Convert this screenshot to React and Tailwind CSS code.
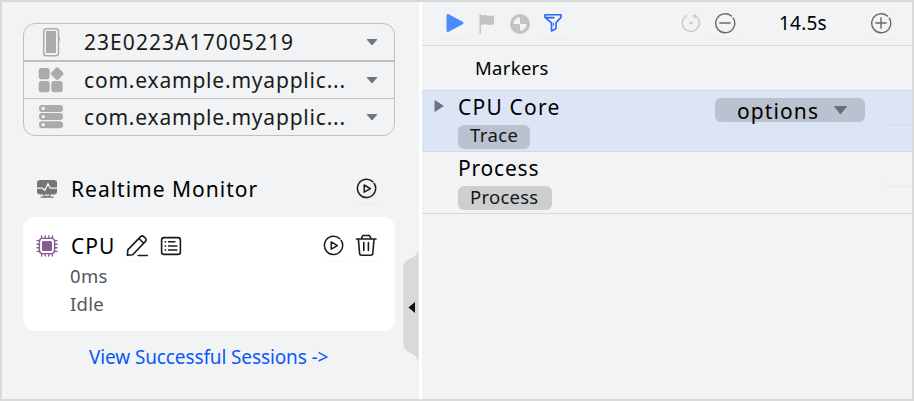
import React from "react";

const Caret = () => (
  <svg className="h-2 w-3 shrink-0" viewBox="0 0 12 8" fill="#6f757e">
    <path d="M1.2 1.5h9.6L6 7z" stroke="#6f757e" strokeLinejoin="round" />
  </svg>
);

const PhoneIcon = () => (
  <svg className="h-[30px] w-7" viewBox="0 0 28 30" fill="none">
    <rect x="6.7" y="1.7" width="14.8" height="27" rx="2.8" stroke="#ababab" strokeWidth="1.5" />
    <rect x="9" y="4" width="10" height="22" fill="#ababab" />
    <path d="M22.3 10v4" stroke="#ababab" />
  </svg>
);

const AppsIcon = () => (
  <svg className="h-[30px] w-7" viewBox="0 0 28 30" fill="#ababab">
    <rect x="1.7" y="3" width="11" height="11.2" rx="2.8" />
    <rect x="1.7" y="16" width="11" height="11.2" rx="2.8" />
    <rect x="14.3" y="16" width="11.4" height="11.2" rx="2.8" />
    <rect x="15.2" y="3.6" width="10" height="10" rx="2" transform="rotate(45 20.2 8.6)" />
  </svg>
);

const ServerIcon = () => (
  <svg className="h-[30px] w-7" viewBox="0 0 28 30">
    {[3, 11.1, 19.2].map((y) => (
      <g key={y}>
        <rect x="2" y={y} width="24" height="7" rx="3" fill="#ababab" />
        <circle cx="6.2" cy={y + 3.5} r="1.7" fill="#f1f3f5" />
      </g>
    ))}
  </svg>
);

const MonitorIcon = () => (
  <svg className="h-5 w-[22px]" viewBox="0 0 22 20" fill="none">
    <rect x="1" y="1" width="20" height="14.4" rx="3" fill="#757575" />
    <path d="M1 9.2h5.6l2.2 2.2L12 4.8l2.2 4.4H21" stroke="#f1f3f5" strokeWidth="1.3" />
    <path d="M8 15v2.4h6V15M4.6 18.1h13" stroke="#757575" strokeWidth="1.2" />
  </svg>
);

const ChipIcon = () => (
  <svg className="size-[22px]" viewBox="0 0 22 22" fill="none" stroke="#885b93" strokeWidth="1.4" strokeLinecap="round">
    <rect x="3.4" y="3.4" width="15.2" height="15.2" rx="3" />
    <rect x="6" y="6" width="10" height="10" rx="1.6" fill="#885b93" stroke="none" />
    <path d="M5.6 3.2V1M9.2 3.2V1M12.8 3.2V1M16.4 3.2V1M5.6 21v-2.2M9.2 21v-2.2M12.8 21v-2.2M16.4 21v-2.2M3.2 5.6H1M3.2 9.2H1M3.2 12.8H1M3.2 16.4H1M21 5.6h-2.2M21 9.2h-2.2M21 12.8h-2.2M21 16.4h-2.2" />
  </svg>
);

const PencilIcon = () => (
  <svg className="size-6" viewBox="0 0 24 24" fill="none" stroke="#1b1b1b" strokeWidth="1.6" strokeLinejoin="round" strokeLinecap="round">
    <path d="M2.4 22.2l.4-5.3L15.6 3.6a2.3 2.3 0 0 1 3.2 0l1.6 1.6a2.3 2.3 0 0 1 0 3.2L7.7 21.7zM13.9 5.5l4.8 4.8M13.3 22.5h9" />
  </svg>
);

const ListIcon = () => (
  <svg className="h-5 w-[22px]" viewBox="0 0 22 20" fill="none" stroke="#1b1b1b" strokeWidth="1.6">
    <rect x="1.6" y="1.6" width="18.8" height="16.8" rx="2.4" />
    <path d="M4.6 5.8h1.6M4.6 10h1.6M4.6 14h1.6M8 5.8h7.4M8 10h9.4M8 14h9.4" strokeWidth="1.4" />
  </svg>
);

const PlayCircle = () => (
  <svg className="size-[22px]" viewBox="0 0 22 22" fill="none" stroke="#1b1b1b" strokeWidth="1.5" strokeLinejoin="round" strokeLinecap="round">
    <path d="M18.2 6.5A9.1 9.1 0 1 1 16.8 4.8" />
    <path d="M8.2 8v7.2l6.2-3.6z" />
  </svg>
);

const TrashIcon = () => (
  <svg className="size-6" viewBox="0 0 24 24" fill="none" stroke="#1b1b1b" strokeWidth="1.6" strokeLinejoin="round" strokeLinecap="round">
    <path d="M2.4 6h19.6M7.4 5.8l1.4-3.3h6.8l1.4 3.3M4.4 6.3l1.2 14a2 2 0 0 0 2 1.9h9.2a2 2 0 0 0 2-1.900L20 6.300M9.8 9.500v8M14.400 9.500v8" />
  </svg>
);

const ZoomCircle = ({ plus }) => (
  <svg className="size-[22px]" viewBox="0 0 22 22" fill="none" stroke="#67696c" strokeWidth="1.4" strokeLinecap="round">
    <path d="M19.3 6.2A9.5 9.5 0 1 1 17.4 4" />
    <path d="M5.8 11h10.4" />
    {plus && <path d="M11 5.8v10.4" />}
  </svg>
);

/* Square icon button whose rounded lower edge is faintly visible */
const IconButton = ({ className = "", children }) => (
  <div className={"flex h-8 w-8 shrink-0 items-center justify-center rounded-md border-b-2 border-black/[0.015] " + className}>
    {children}
  </div>
);

const Selector = ({ icon, label, className, textClass }) => (
  <div className={"flex items-center pl-[13px] pr-4 " + className}>
    {icon}
    <span className={"ml-[19px] flex-1 text-[21px] leading-[30px] text-[#1b1b1b] " + textClass}>{label}</span>
    <Caret />
  </div>
);

const Sidebar = () => (
  <div className="relative flex w-[417px] shrink-0 flex-col pl-[21px]">
    <div className="mt-[21px] flex h-[113px] w-[372px] flex-col rounded-[12px] border border-[#bfc0c2]">
      <Selector icon={<PhoneIcon />} label="23E0223A17005219" className="h-[38px] border-b-2 border-[#bfc0c2]" textClass="tracking-[1.05px]" />
      <Selector icon={<AppsIcon />} label="com.example.myapplic..." className="h-[37px] border-b border-[#bfc0c2]" textClass="tracking-[0.8px]" />
      <Selector icon={<ServerIcon />} label="com.example.myapplic..." className="h-9" textClass="tracking-[0.8px]" />
    </div>

    <div className="mt-[33px] flex h-10 w-[372px] items-center pl-[13px] pr-3">
      <MonitorIcon />
      <span className="ml-[13px] flex-1 text-[21px] leading-[30px] tracking-[1px] text-black">Realtime Monitor</span>
      <IconButton><PlayCircle /></IconButton>
    </div>

    <div className="mt-2 flex h-[114px] w-[372px] flex-col rounded-[12px] bg-white pl-[13px] pr-3 pt-[13px]">
      <div className="flex h-8 items-center">
        <ChipIcon />
        <span className="ml-[13px] w-[50px] text-[21px] leading-[30px] tracking-[1px] text-black">CPU</span>
        <IconButton><PencilIcon /></IconButton>
        <div className="ml-[7px]"><ListIcon /></div>
        <IconButton className="ml-auto"><PlayCircle /></IconButton>
        <IconButton className="mr-px"><TrashIcon /></IconButton>
      </div>
      <div className="pl-[34px] text-[18.5px] leading-7 tracking-[0.3px] text-[#54565a]">
        <div>0ms</div>
        <div>Idle</div>
      </div>
    </div>

    <div className="mt-3 pl-[66px] text-[19px] leading-7 tracking-[-0.12px] text-[#0a59f7]"><span>View Successful Sessions -&gt;</span></div>

    <svg className="absolute right-0 top-[246px] h-[116px] w-4" viewBox="0 0 16 116">
      <path d="M15.5 0C15 6 11.5 9 7.5 10.5 2.5 12 .3 16 .3 20v74c0 5 2.2 9 7.2 11 5 2 7.5 5 8 11z" fill="#d9d9d9" />
      <path d="M12 54v11L5.5 59.5z" fill="#111" />
    </svg>
  </div>
);

const Toolbar = () => (
  <div className="flex h-[44px] shrink-0 items-center border-b border-[#d8dade] pl-[17px] pr-[15px]">
    <IconButton>
      <svg className="size-5" viewBox="0 0 20 20"><path d="M3 2.5v15L17 10z" fill="#4b8bff" stroke="#4b8bff" strokeWidth="3" strokeLinejoin="round" /></svg>
    </IconButton>
    <div className="flex w-8 justify-center">
      <svg className="size-5" viewBox="0 0 20 20" fill="#c2c3c5"><path d="M2.5 0v20h1.4V11.2h.8c3-2.4 6.500 1.2 12.300-1V1.200c-5 2.100-8-1.600-12.300.2h-.8V0z" /></svg>
    </div>
    <div className="flex w-[34px] justify-center">
      <svg className="size-5" viewBox="0 0 20 20"><circle cx="10" cy="10" r="10" fill="#c2c3c5" /><path d="M10 3v7H3.500A7 7 0 0 1 10 3zM10 17v-7h6.500A7 7 0 0 1 10 17z" fill="#f1f3f5" /></svg>
    </div>
    <IconButton>
      <svg className="size-5" viewBox="0 0 20 20" fill="none" stroke="#2468f8" strokeWidth="1.6" strokeLinejoin="round"><path d="M2 1.8h16v2.600l-5 5.400v5.800L8.500 18V9.800L2 4.400zM2.500 4.600h9" /><path d="M10.400 9.800v3" strokeWidth="1" /></svg>
    </IconButton>
    <div className="ml-auto flex w-6 justify-center">
      <svg className="size-5" viewBox="0 0 20 20" fill="none" stroke="#c6c8ca" strokeWidth="1.4"><path d="M6 1.300A8.500 8.500 0 1 0 15.500 2.600" /><path d="M11.500 2h4M14 4.200V.5" /><circle cx="10" cy="9" r="1.600" fill="#c6c8ca" stroke="none" /></svg>
    </div>
    <IconButton className="ml-[6px]"><ZoomCircle /></IconButton>
    <span className="ml-[38px] w-[86px] pb-0.5 text-[19px] leading-7 tracking-[0.2px] text-black">14.5s</span>
    <IconButton><ZoomCircle plus /></IconButton>
  </div>
);

const Lane = ({ title, titleClass, tag, tagClass, className, expandable, children }) => (
  <div className={"flex shrink-0 border-b border-[#d5d8dd] " + className}>
    <div className="w-9 shrink-0 pl-3 pt-[8px]">
      {expandable && (
        <svg className="h-[14px] w-[10px]" viewBox="0 0 10 14"><path d="M1.2 2v10L8.8 7z" fill="#6f757e" stroke="#6f757e" strokeWidth="1.4" strokeLinejoin="round" /></svg>
      )}
    </div>
    <div className="flex flex-1 flex-col items-start pt-px">
      <span className={"h-[33px] text-[21px] leading-[31px] text-black " + titleClass}>{title}</span>
      <span className={"h-6 rounded-[6px] pl-3 text-[18.5px] text-[#161616] " + tagClass}>{tag}</span>
    </div>
    {children}
  </div>
);

export default function App() {
  return (
    <div className="flex h-[401px] w-[914px] overflow-hidden whitespace-nowrap border-2 border-[#d9d9d9] bg-[#f1f3f5] font-['Noto_Sans',sans-serif]">
      <Sidebar />
      <div className="w-[3px] shrink-0 bg-white" />
      <div className="flex w-[490px] flex-col">
        <Toolbar />
        <div className="h-[45px] shrink-0 border-b border-[#d5d8dd] pl-[53px] text-[18.5px] leading-[44px] tracking-[0.3px] text-black"><span>Markers</span></div>
        <Lane title="CPU Core" tag="Trace" expandable className="h-[61px] bg-[#dce5f6]" titleClass="tracking-[1.2px]" tagClass="w-[72px] bg-[#bac2cf] leading-[20px] tracking-[0.4px]">
          <div className="mr-4 mt-[7px] flex h-6 w-[150px] items-center rounded-[6px] bg-[#bac2cf] pl-[22px]">
            <span className="w-[95px] pt-0.5 text-[21px] leading-6 tracking-[1.1px] text-black">options</span>
            <svg className="h-[11px] w-4" viewBox="0 0 16 11"><path d="M2.5 1.5h12L8.5 9z" fill="#6b707a" stroke="#6b707a" strokeLinejoin="round" /></svg>
          </div>
          <div className="mt-[3px] h-8 w-[31px] rounded-bl-md border-b-2 border-black/[0.02]" />
        </Lane>
        <Lane title="Process" tag="Process" className="h-[62px]" titleClass="tracking-[0.8px]" tagClass="w-[94px] bg-[#cccecf] leading-[22px] tracking-[0.25px]">
          <div className="mt-[3px] h-8 w-[31px] rounded-bl-md border-b-2 border-black/[0.02]" />
        </Lane>
      </div>
    </div>
  );
}
